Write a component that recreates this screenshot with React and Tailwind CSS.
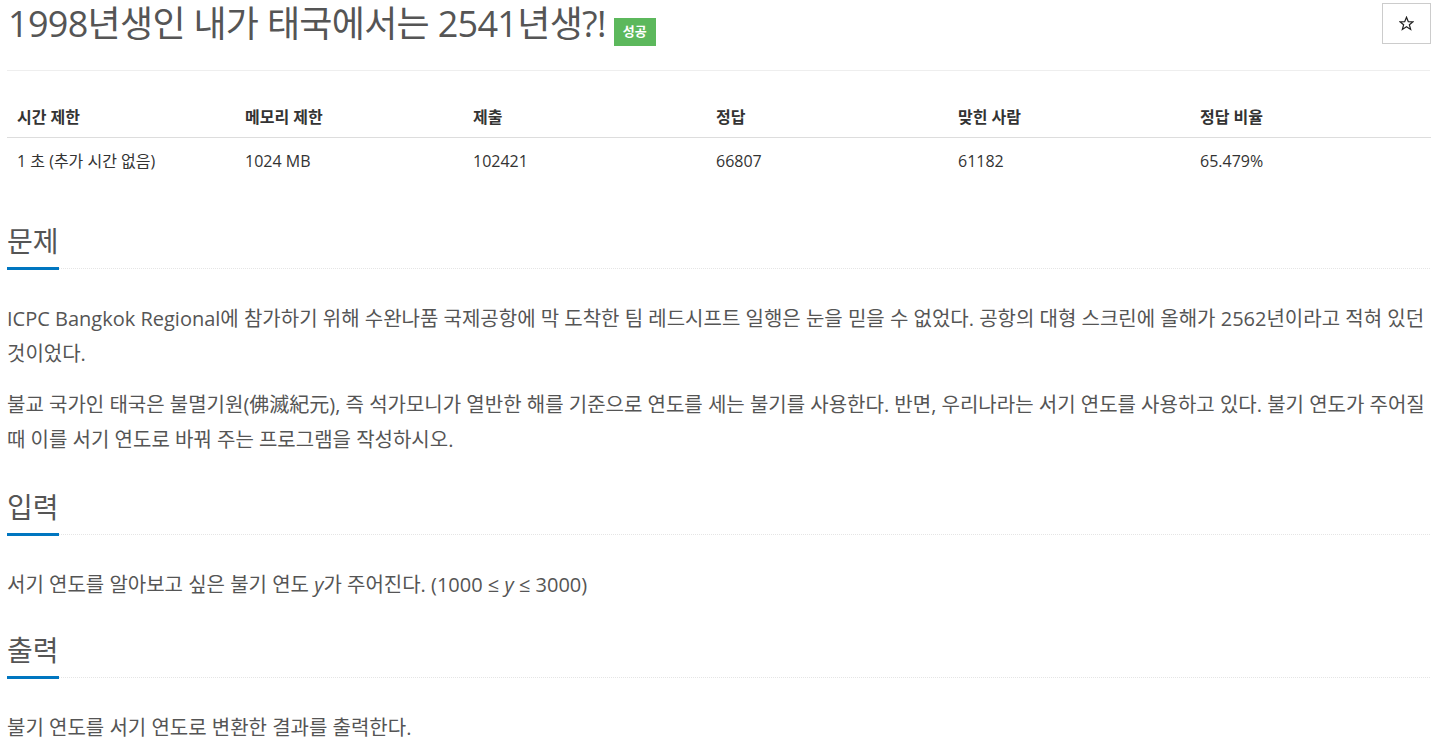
import React from 'react';

const font = { fontFamily: '"Open Sans", "Noto Sans CJK KR", sans-serif' };

function Headline({ title }) {
    // blue bar sits over the dotted rule, like the judge's headline style
    return (
        <div className="flex border-b border-dotted border-[#e5e5e5]">
            <h2 className="-mb-[2px] border-b-[3px] border-[#0076c0] pb-[11px] text-[28px] font-normal leading-[30px] text-[#555]">{title}</h2>
        </div>
    );
}

function Section({ title, children, className }) {
    return (
        <section className={className}>
            <Headline title={title} />
            <div className="pt-[32px] text-[20px] leading-[35px] text-[#555]">{children}</div>
        </section>
    );
}

const columns = [
    { head: '시간 제한', value: '1 초 (추가 시간 없음)', w: 'w-[228px]' },
    { head: '메모리 제한', value: '1024 MB', w: 'w-[228px]' },
    { head: '제출', value: '102421', w: 'w-[243px]' },
    { head: '정답', value: '66807', w: 'w-[242px]' },
    { head: '맞힌 사람', value: '61182', w: 'w-[242px]' },
    { head: '정답 비율', value: '65.479%', w: 'w-[241px]' },
];

export default function App() {
    return (
        <div className="min-h-screen bg-white px-[7px]" style={font}>
            {/* Title + star */}
            <div className="flex items-start justify-between border-b border-[#eee] pb-[24px]">
                <h1 className="flex items-start pt-[5px] pl-px">
                    <span className="text-[36px] font-normal leading-[38px] tracking-[-0.7px] text-[#555]">1998년생인 내가 태국에서는 2541년생?!</span>
                    <span className="ml-[8px] mt-[13px] flex h-[28px] items-center bg-[#5cb85c] px-[9px] text-[13px] font-semibold text-white">성공</span>
                </h1>
                <button className="-mr-px mt-[3px] flex h-[41px] w-[49px] items-center justify-center border border-[#ccc] bg-white">
                    <svg width="15" height="15" viewBox="0 0 24 24" fill="none" stroke="#222" strokeWidth="2" strokeLinejoin="miter">
                        <polygon points="12,2 14.9,9 22.5,9.3 16.6,14.1 18.6,21.5 12,17.3 5.4,21.5 7.4,14.1 1.5,9.3 9.1,9" />
                    </svg>
                </button>
            </div>

            {/* Limits table */}
            <table className="mt-[27px] w-full table-fixed border-collapse text-[16px] leading-[19px] text-[#333]">
                <thead>
                    <tr className="border-b border-[#ddd]">
                        {columns.map((c) => (
                            <th key={c.head} className={`${c.w} px-[10px] py-[10px] text-left font-bold`}>{c.head}</th>
                        ))}
                    </tr>
                </thead>
                <tbody>
                    <tr>
                        {columns.map((c) => (
                            <td key={c.head} className="px-[10px] pt-[14px] pb-[10px]">{c.value}</td>
                        ))}
                    </tr>
                </tbody>
            </table>

            <Section title="문제" className="mt-[45px]">
                <p className="mb-4">ICPC Bangkok Regional에 참가하기 위해 수완나품 국제공항에 막 도착한 팀 레드시프트 일행은 눈을 믿을 수 없었다. 공항의 대형 스크린에 올해가 2562년이라고 적혀 있던 것이었다.</p>
                <p className="mb-4">불교 국가인 태국은 불멸기원(佛滅紀元), 즉 석가모니가 열반한 해를 기준으로 연도를 세는 불기를 사용한다. 반면, 우리나라는 서기 연도를 사용하고 있다. 불기 연도가 주어질 때 이를 서기 연도로 바꿔 주는 프로그램을 작성하시오.</p>
            </Section>

            <Section title="입력" className="mt-[35px]">
                <p className="mb-4">서기 연도를 알아보고 싶은 불기 연도 <i>y</i>가 주어진다. (1000 ≤ <i>y</i> ≤ 3000)</p>
            </Section>

            <Section title="출력" className="mt-[33px]">
                <p className="mb-4">불기 연도를 서기 연도로 변환한 결과를 출력한다.</p>
            </Section>
        </div>
    );
}
